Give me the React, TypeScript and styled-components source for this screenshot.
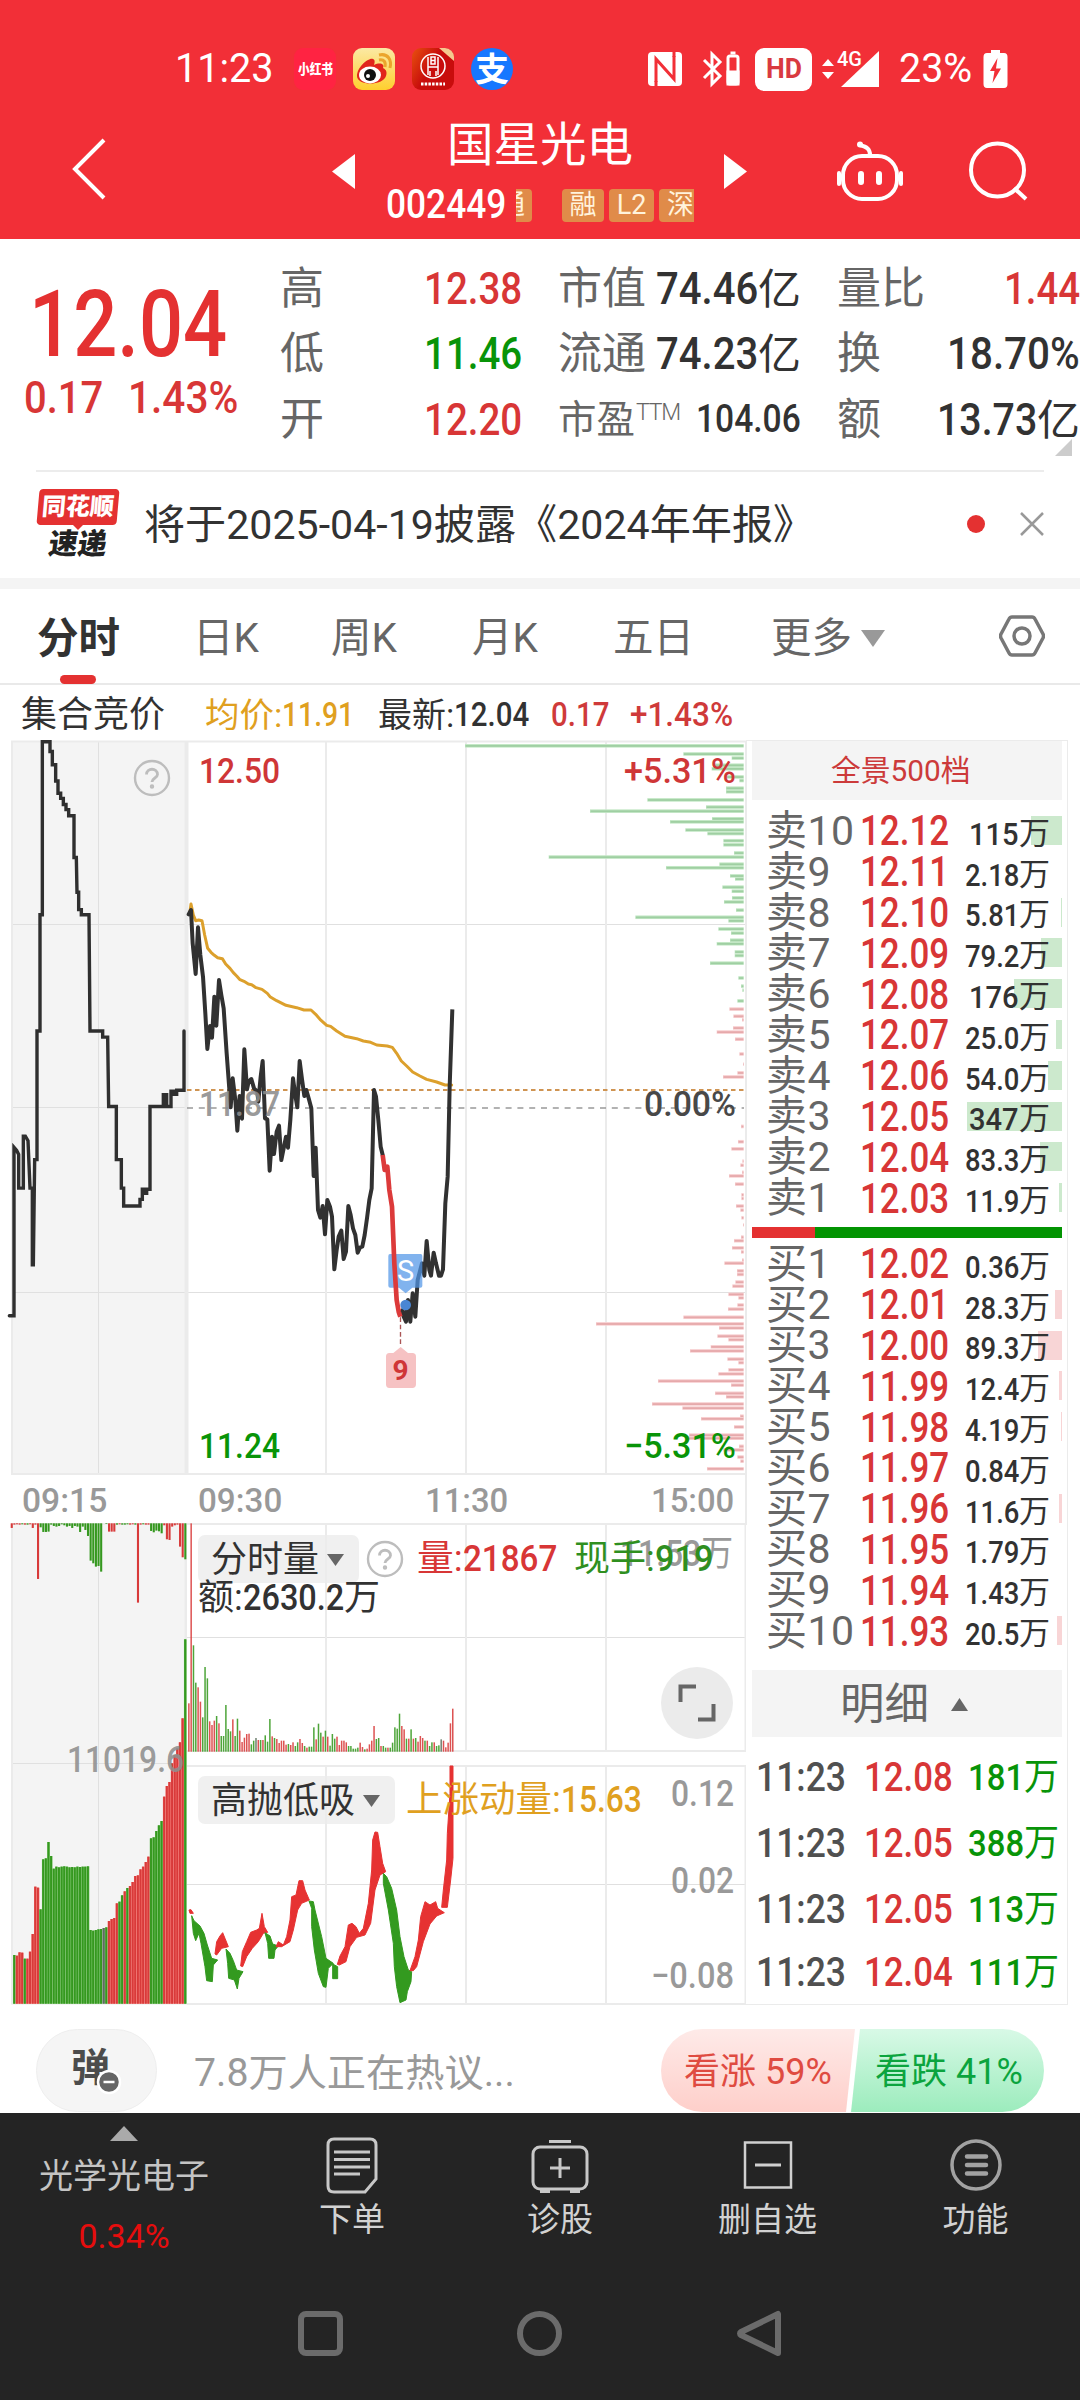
import React, { useLayoutEffect, useRef, useState } from "react";
import styled, { createGlobalStyle } from "styled-components";

const FONT = `Roboto, "Noto Sans CJK SC", "Noto Sans", sans-serif`;
const RED = "#e43131";
const GREEN = "#089408";
const INK = "#323232";
const MUTE = "#666666";
const SOFT = "#999999";
const GOLD = "#e0a01f";

const GlobalStyle = createGlobalStyle`
  * { box-sizing: border-box; }
  body { margin: 0; background: #fff; font-family: ${FONT}; line-height: 1; color: ${INK}; }
  svg { display: block; flex: none; }
  svg text { font-family: ${FONT}; }
`;

/* ---------- text that is squeezed to a known width ---------- */

const FitBox = styled.span<{ $w: number; $size: number; $c?: string; $weight?: number }>`
  display: inline-block;
  flex: none;
  width: ${(p) => p.$w}px;
  height: ${(p) => p.$size}px;
  font-size: ${(p) => p.$size}px;
  line-height: ${(p) => p.$size}px;
  font-weight: ${(p) => p.$weight ?? 400};
  color: ${(p) => p.$c ?? INK};
  white-space: nowrap;
`;
const FitInner = styled.span`
  display: inline-block;
  transform-origin: 0 50%;
`;

type FitProps = { w: number; size: number; c?: string; weight?: number; children: React.ReactNode };
function Fit({ w, size, c, weight, children }: FitProps) {
  const ref = useRef<HTMLSpanElement>(null);
  const [scale, setScale] = useState(1);
  useLayoutEffect(() => {
    if (ref.current) setScale(w / ref.current.offsetWidth);
  }, [w]);
  return (
    <FitBox $w={w} $size={size} $c={c} $weight={weight}>
      <FitInner ref={ref} style={{ transform: `scaleX(${scale})` }}>
        {children}
      </FitInner>
    </FitBox>
  );
}

/* ---------- page ---------- */

const Page = styled.div`
  width: 1080px;
  height: 2400px;
  display: flex;
  flex-direction: column;
  overflow: hidden;
  background: #fff;
`;

const TopArea = styled.header`
  height: 239px;
  background: #f22f37;
  color: #fff;
`;
const StatusBar = styled.div`
  height: 100px;
  padding: 38px 72px 0 175px;
  display: flex;
  align-items: center;
  justify-content: space-between;
`;
const StatusGroup = styled.div<{ $gap: number }>`
  display: flex;
  align-items: center;
  gap: ${(p) => p.$gap}px;
`;
const AppTile = styled.div<{ $bg: string; $round?: boolean }>`
  width: 42px;
  height: 42px;
  border-radius: ${(p) => (p.$round ? "50%" : "9px")};
  background: ${(p) => p.$bg};
  display: flex;
  align-items: center;
  justify-content: center;
  overflow: hidden;
  color: #fff;
`;
const HdBadge = styled.div`
  width: 57px;
  height: 43px;
  border-radius: 9px;
  background: #fff;
  display: flex;
  align-items: center;
  justify-content: center;
`;

const TitleBar = styled.div`
  height: 139px;
  display: flex;
  align-items: center;
  padding-left: 70px;
`;
const Arrow = styled.svg<{ $ml: number }>`
  margin-left: ${(p) => p.$ml}px;
  margin-top: 3px;
`;
const TitleColumn = styled.div`
  width: 308px;
  height: 139px;
  margin-left: 31px;
  padding-top: 22px;
  display: flex;
  flex-direction: column;
  align-items: center;
`;
const StockName = styled.h1`
  margin: 0 0 20px;
  height: 46px;
  font-size: 46.5px;
  line-height: 46px;
  font-weight: 400;
`;
const CodeRow = styled.div`
  width: 308px;
  height: 34px;
  display: flex;
  align-items: center;
`;
const TagStrip = styled.div`
  width: 179px;
  height: 33px;
  margin-left: 9px;
  display: flex;
  overflow: hidden;
  justify-content: flex-end;
`;
const Tag = styled.span<{ $w: number; $mr?: number; $clip?: "left" | "right" }>`
  flex: none;
  width: ${(p) => p.$w}px;
  height: 33px;
  margin-right: ${(p) => p.$mr ?? 0}px;
  border-radius: ${(p) => (p.$clip === "left" ? "0 4px 4px 0" : p.$clip === "right" ? "4px 0 0 4px" : "4px")};
  background: #e08b49;
  color: #fff3dc;
  font-size: 27px;
  line-height: 33px;
  display: flex;
  overflow: hidden;
  justify-content: ${(p) => (p.$clip === "left" ? "flex-end" : p.$clip === "right" ? "flex-start" : "center")};
  padding: 0 ${(p) => (p.$clip === "left" ? 7 : 0)}px 0 ${(p) => (p.$clip === "right" ? 8 : 0)}px;
`;

/* ---------- quote ---------- */

const Quote = styled.section`
  height: 231px;
  display: flex;
  position: relative;
`;
const PriceBlock = styled.div`
  width: 281px;
  padding: 39px 0 0 29px;
`;
const ChangeRow = styled.div`
  display: flex;
  gap: 25px;
  margin: 4px 0 0 -5px;
`;
const StatGrid = styled.div`
  display: grid;
  grid-template-columns: 242px 243px 243px;
  grid-auto-rows: 65.6px;
  column-gap: 36px;
  padding-top: 17px;
`;
const Stat = styled.div`
  display: flex;
  justify-content: space-between;
  align-items: center;
`;
const StatLabel = styled.span<{ $size?: number }>`
  font-size: ${(p) => p.$size ?? 44}px;
  color: ${MUTE};
  white-space: nowrap;
`;
const Sup = styled.sup`
  font-size: 23px;
  font-weight: 300;
  line-height: 0;
  vertical-align: 13px;
  margin-left: 1px;
  letter-spacing: -1.2px;
`;
const Corner = styled.svg`
  position: absolute;
  right: 8px;
  bottom: 14px;
`;

const News = styled.section`
  margin: 0 36px;
  height: 108px;
  border-top: 2px solid #ececec;
  display: flex;
  align-items: center;
  padding-bottom: 2px;
`;
const NewsBadge = styled.div`
  width: 84px;
  height: 70px;
  margin-right: 24px;
  display: flex;
  flex-direction: column;
  align-items: center;
`;
const BadgeTop = styled.div`
  width: 80px;
  height: 36px;
  border-radius: 4px;
  background: ${RED};
  color: #fff;
  font-weight: 900;
  font-size: 24px;
  line-height: 36px;
  text-align: center;
  transform: skewX(-5deg);
`;
const BadgeTail = styled.div`
  border: 5px solid transparent;
  border-top-color: ${RED};
  border-bottom: 0;
`;
const BadgeBottom = styled.div`
  font-weight: 900;
  font-size: 29px;
  line-height: 28px;
  transform: skewX(-8deg);
  color: #222;
`;
const Headline = styled.div`
  padding-top: 3px;
`;
const Dot = styled.i`
  width: 18px;
  height: 18px;
  border-radius: 50%;
  background: ${RED};
  margin: 0 35px 0 auto;
`;
const Band = styled.div`
  height: 11px;
  background: #f4f4f4;
`;

const Tabs = styled.nav`
  height: 96px;
  padding-left: 37px;
  border-bottom: 2px solid #e9e9e9;
  display: grid;
  grid-template-columns: 156px 138px 141px 141px 158px 228px 46px;
  align-items: center;
`;
const Tab = styled.div<{ $active?: boolean }>`
  position: relative;
  height: 94px;
  padding-top: 5px;
  display: flex;
  align-items: center;
  gap: 9px;
  font-size: ${(p) => (p.$active ? 41.5 : 40.5)}px;
  font-weight: ${(p) => (p.$active ? 600 : 400)};
  color: ${(p) => (p.$active ? INK : MUTE)};
  &::after {
    content: "";
    display: ${(p) => (p.$active ? "block" : "none")};
    position: absolute;
    left: 23px;
    bottom: -1px;
    width: 36px;
    height: 9px;
    border-radius: 5px;
    background: ${RED};
  }
`;
const InfoRow = styled.div`
  height: 56px;
  padding: 3px 0 0 21px;
  display: flex;
  align-items: center;
`;
const Gap = styled.span<{ $w: number }>`
  flex: none;
  width: ${(p) => p.$w}px;
`;

/* ---------- charts ---------- */

const Main = styled.main`
  height: 1264px;
  display: flex;
`;
const ChartColumn = styled.div`
  width: 746px;
  display: flex;
  flex-direction: column;
`;
const TimeAxis = styled.div`
  height: 49px;
  display: flex;
  align-items: center;
  padding: 3px 0 0 22px;
`;
const Lower = styled.div`
  display: flex;
  height: 482px;
`;
const LowerRight = styled.div`
  display: flex;
  flex-direction: column;
  gap: 13px;
`;
const Panel = styled.div<{ $h: number }>`
  position: relative;
  width: 559px;
  height: ${(p) => p.$h}px;
`;
const PanelLegend = styled.div<{ $top: number }>`
  position: absolute;
  left: 11px;
  top: ${(p) => p.$top}px;
  display: flex;
  align-items: center;
`;
const Picker = styled.div<{ $w: number }>`
  width: ${(p) => p.$w}px;
  height: 48px;
  padding: 2px 15px 0 13px;
  border-radius: 7px;
  background: rgba(236, 236, 236, 0.8);
  display: flex;
  align-items: center;
  justify-content: space-between;
  font-size: 36px;
  line-height: 40px;
`;
const PanelLine = styled.div`
  position: absolute;
  left: 11px;
  top: 57px;
`;
const ExpandButton = styled.div`
  position: absolute;
  left: 474px;
  top: 144px;
  width: 72px;
  height: 72px;
  border-radius: 50%;
  background: #ebebeb;
  display: flex;
  align-items: center;
  justify-content: center;
`;

/* ---------- order book ---------- */

const Book = styled.aside`
  width: 322px;
  height: 1265px;
  margin-top: -1px;
  border: 1px solid #ebebeb;
  border-left: 0;
  padding: 0 5px 0 6px;
`;
const BookHead = styled.div<{ $h: number; $pt?: number; $pr: number }>`
  height: ${(p) => p.$h}px;
  padding: ${(p) => p.$pt ?? 0}px ${(p) => p.$pr}px 0 0;
  background: #f4f4f4;
  display: flex;
  align-items: center;
  justify-content: center;
`;
const BookRows = styled.div<{ $pt: number; $pb: number }>`
  padding: ${(p) => p.$pt}px 0 ${(p) => p.$pb}px;
`;
const BookRow = styled.div`
  position: relative;
  height: 40.8px;
  padding-left: 14px;
  display: flex;
  align-items: center;
`;
const RowLabel = styled.span`
  width: 94px;
  font-size: 41px;
  color: ${MUTE};
  white-space: nowrap;
  letter-spacing: 0.5px;
`;
const DepthBar = styled.i<{ $up?: boolean }>`
  position: absolute;
  right: 0;
  top: 5px;
  height: 29px;
  background: ${(p) => (p.$up ? "#f8d5d6" : "#cce9cd")};
`;
const Amount = styled.span`
  position: relative;
  margin: 5px 12px 0 auto;
  display: flex;
`;
const Ratio = styled.div`
  height: 11px;
  background: linear-gradient(90deg, ${RED} 0 63.5px, #029402 63.5px);
`;
const Trades = styled.div`
  padding-top: 7px;
`;
const Trade = styled.div<{ $h: number }>`
  height: ${(p) => p.$h}px;
  display: flex;
  align-items: center;
  padding-left: 4px;
`;
const TradeAmount = styled.span`
  margin: 0 3px 0 auto;
  display: flex;
`;

/* ---------- footer ---------- */

const Talk = styled.section`
  height: 108px;
  padding: 24px 36px 1px;
  display: flex;
`;
const Danmaku = styled.div`
  width: 121px;
  height: 83px;
  border-radius: 42px;
  background: #f5f5f5;
  border: 1px solid #eee;
  display: flex;
  align-items: center;
  justify-content: center;
  position: relative;
  font-size: 39px;
  font-weight: 700;
  color: #4c4c4c;
  padding: 0 12px 4px 0;
`;
const MinusBadge = styled.svg`
  position: absolute;
  left: 59px;
  top: 39px;
`;
const TalkHint = styled.div`
  width: 504px;
  padding: 4px 0 0 37px;
  display: flex;
  align-items: center;
`;
const Votes = styled.div`
  width: 383px;
  height: 83px;
  border-radius: 42px;
  overflow: hidden;
  display: flex;
`;
const Vote = styled.div<{ $up?: boolean }>`
  width: ${(p) => (p.$up ? 199 : 198)}px;
  margin-left: ${(p) => (p.$up ? 0 : -14)}px;
  height: 83px;
  padding: 2px 0 0 ${(p) => (p.$up ? 23 : 29)}px;
  display: flex;
  align-items: center;
  background: ${(p) => (p.$up ? "linear-gradient(#feeae8, #fecfca)" : "linear-gradient(#d8f9e6, #9cecbd)")};
  clip-path: ${(p) => (p.$up ? "polygon(0 0, 194px 0, 185px 100%, 0 100%)" : "polygon(14px 0, 100% 0, 100% 100%, 5px 100%)")};
`;
const Dock = styled.footer`
  height: 287px;
  background: #242424;
  color: #d2d2d2;
`;
const DockRow = styled.div`
  height: 150px;
  display: grid;
  grid-template-columns: 248px 208px 208px 207px 209px;
`;
const Sector = styled.div`
  display: flex;
  flex-direction: column;
  align-items: center;
  padding-top: 13px;
`;
const SectorName = styled.div`
  font-size: 34px;
  line-height: 34px;
  margin: 18px 0 26px;
  color: #c4c4c4;
`;
const DockItem = styled.div`
  display: flex;
  flex-direction: column;
  align-items: center;
  font-size: 33px;
`;
const DockIcon = styled.div`
  height: 90px;
  padding-top: 22px;
`;
const NavRow = styled.div`
  height: 137px;
  padding: 47px 0 0 297px;
  display: flex;
  gap: 172px;
`;

/* ---------- data ---------- */

type Level = [string, string, string, number];
const SELLS: Level[] = [
  ["10", "12.12", "115", 31], ["9", "12.11", "2.18", 0], ["8", "12.10", "5.81", 1], ["7", "12.09", "79.2", 21],
  ["6", "12.08", "176", 48], ["5", "12.07", "25.0", 6], ["4", "12.06", "54.0", 14], ["3", "12.05", "347", 95],
  ["2", "12.04", "83.3", 22], ["1", "12.03", "11.9", 3],
];
const BUYS: Level[] = [
  ["1", "12.02", "0.36", 0], ["2", "12.01", "28.3", 7], ["3", "12.00", "89.3", 24], ["4", "11.99", "12.4", 3],
  ["5", "11.98", "4.19", 1], ["6", "11.97", "0.84", 0], ["7", "11.96", "11.6", 3], ["8", "11.95", "1.79", 0],
  ["9", "11.94", "1.43", 0], ["10", "11.93", "20.5", 5],
];
const TRADES: [string, string, number][] = [
  ["12.08", "181", 66], ["12.05", "388", 66], ["12.05", "113", 66], ["12.04", "111", 60],
];

const AUCTION_PATH =
  "M28 1148H42V818L50 824L56 832V898H70V796H76L84 805L90 898H97V1048H100L104 842H111V590H120V362H127V23H150V42H157V68H167V100H174V124H182V134H190V146H198V156H206V168H222V250H229L231 318H236V352H244V362H267L270 590H308V602H323L326 738H349V842H364V898H371V933H420V920H427V900H433V908H440V900H450V738H490V715H500V738H513V708H522V714H530V706H552V590";
const PRICE_A =
  "26,103 33,90 38,190 47,282 54,142 61,225 69,290 76,400 82,507 90,438 96,473 103,350 109,437 117,300 124,345 131,385 140,520 152,682 158,595 166,660 172,752 179,648 186,716 193,508 201,628 206,605 214,597 222,625 232,635 235,665 242,590 248,543 255,715 262,718 269,872 276,770 282,822 290,755 297,737 304,840 311,805 318,770 324,803 331,720 339,595 345,640 352,682 359,543 366,598 373,648 379,630 386,655 394,685 401,888 407,803 414,990 421,1013 428,978 435,1063 442,960 450,980 456,1010 463,1168 470,1110 476,1070 484,1052 491,1137 498,1115 505,978 512,1005 519,1045 526,1065 533,1118 540,1102 547,1100 554,1065 561,1015 568,960 575,925 582,630 588,650 595,720 602,800 608,825";
const PRICE_FALL = "608,825 614,870 622,860 628,930 636,980 643,1150 650,1260 656,1295 661,1310";
const PRICE_B =
  "661,1300 668,1290 671,1310 678,1325 684,1260 691,1325 698,1240 706,1310 713,1200 726,1150 733,1187 740,1083 748,1170 753,1187 761,1118 768,1150 777,1187 783,1187 789,1168 796,970 803,890 809,620 817,388";
const AVERAGE =
  "30,95 33,72 40,105 47,122 56,120 66,122 74,165 83,205 93,217 103,226 113,233 127,236 137,252 150,265 160,278 170,288 180,299 192,304 205,312 215,314 228,323 246,328 262,340 270,350 290,362 318,376 350,383 372,390 393,390 407,403 420,418 440,436 452,439 470,453 495,469 530,476 550,483 572,487 590,495 622,498 637,502 650,520 664,543 680,558 698,576 720,588 740,598 770,606 795,615 815,615";

const DEPTH_GREEN =
  "31:75 47:730 55:875 69:825 76:815 92:860 99:898 114:858 121:858 137:622 151:798 159:450 174:816 180:690 196:736 203:802 217:850 225:850 241:882 249:326 263:838 270:678 286:870 292:885 308:847 316:875 329:876 337:852 353:888 367:586 374:865 390:835 398:873 412:870 419:830 435:884 442:884 457:810 486:895 502:903 510:907 531:892";
const DEPTH_RED =
  "547:868 561:880 568:906 584:879 592:830 606:885 635:898 655:909 672:892 680:849 777:903 807:894 821:874 845:907 853:901 867:906 874:867 890:885 911:904 918:904 933:888 941:901 956:904 970:909 994:903 1001:882 1015:876 1023:903 1039:906 1045:853 1060:891 1067:891 1082:886 1090:877 1106:865 1113:895 1127:892 1135:864 1151:730 1164:468 1172:837 1188:832 1195:865 1209:812 1217:750 1233:862 1240:895 1254:865 1262:835 1276:654 1284:873 1300:825 1307:858 1321:636 1329:727 1345:900 1350:783 1366:882 1382:747 1388:740 1404:897 1411:850 1425:892 1433:901 1448:801";

const VOLUME =
  "r610 r70 g436 g548 r562 r605 g652 g501 g535 r664 r675 r662 g648 r670 g708 g708 g615 g687 g694 r658 g708 g656 r692 r726 r713 r702 r701 g733 g722 x714 r720 g720 r720 g706 g725 g657 r709 g714 r717 r729 r722 r722 r734 g732 r735 r727 g738 g727 r717 r729 g738 r743 g740 g740 g682 r718 g671 g698 r710 g692 r710 g737 g702 g716 r710 r735 r722 r722 r727 g738 g738 g746 g746 g743 r728 r741 g748 r746 r733 r722 r678 g717 g714 r738 g738 g743 r743 g743 g728 g682 g686 g641 r678 r688 g716 r716 g688 r716 g714 r725 r708 r714 g722 r722 g738 g727 r727 g738 g736 x718 r722 r742 r728 r670 r626";
const UNMATCHED =
  "r84 r74 r73 r74 g73 r74 g74 r73 r84 r74 r237 g82 g96 g96 g95 g74 g78 g80 g78 g73 g76 g80 g78 g84 g78 g80 g96 g80 g90 g108 g182 g190 g200 g198 g215 g70 g72 r95 r95 r95 g74 r73 g74 g74 g73 r74 r73 g74 r308 r74 g73 r74 r74 g93 g97 g92 g94 g100 r76 r118 r120 r80 r76 r74 r140 r172 g178";
const MATCHED =
  "g1365 r1367 r1357 r1358 g1376 r1376 r1355 r1302 r1160 r1163 g1228 g1078 g1075 g1026 g1068 g1106 g1100 g1102 g1100 g1099 g1100 g1102 g1101 g1102 g1100 g1101 g1100 g1100 g1099 g1290 g1292 g1290 g1288 g1287 x1284 g1282 r1263 r1257 r1254 r1210 g1205 g1186 r1174 g1164 r1158 r1146 r1128 r1126 r1108 r1100 r1086 r1070 g1015 g1012 g993 g976 g963 r890 r858 r846 r790 r765 r745 r727 r655 g418";

const WAVES: [string, string][] = [
  ["r", "567,1230 573,1229 580,1240 570,1240"],
  ["g", "575,1247 582,1262 600,1278 612,1300 622,1335 635,1375 653,1380 640,1395 637,1445 620,1442 615,1400 603,1330 597,1300 587,1322 580,1300"],
  ["r", "645,1362 650,1325 660,1308 668,1298 675,1315 685,1340 665,1345 650,1365"],
  ["g", "678,1347 690,1360 700,1382 710,1410 729,1415 717,1435 712,1467 703,1440 686,1435 683,1390"],
  ["r", "722,1398 727,1355 740,1325 752,1297 770,1290 778,1285 786,1240 793,1280 803,1297 790,1300 775,1325 757,1345 740,1370 728,1400"],
  ["g", "795,1298 810,1308 818,1332 835,1338 825,1350 822,1375 806,1375 803,1330"],
  ["r", "828,1340 835,1325 850,1335 860,1310 870,1260 875,1190 888,1185 897,1142 908,1142 915,1170 928,1200 905,1210 893,1230 880,1290 870,1325 845,1340"],
  ["g", "927,1203 940,1205 945,1230 965,1310 978,1375 1000,1390 985,1405 978,1462 970,1460 955,1420 943,1350 935,1280 935,1225"],
  ["g", "998,1392 1013,1400 1013,1436 998,1436"],
  ["r", "1012,1393 1020,1368 1035,1340 1045,1275 1056,1270 1068,1280 1078,1300 1090,1285 1105,1210 1115,1110 1118,1020 1125,996 1133,997 1140,1040 1148,1090 1157,1115 1140,1125 1125,1170 1112,1270 1095,1305 1070,1312 1050,1340 1038,1385 1018,1395"],
  ["g", "1150,1120 1160,1130 1175,1165 1190,1230 1200,1310 1212,1370 1225,1410 1235,1415 1233,1445 1222,1475 1218,1500 1200,1508 1190,1460 1183,1400 1180,1330 1165,1230 1150,1150"],
  ["r", "1230,1412 1245,1370 1255,1320 1262,1250 1275,1205 1290,1215 1307,1205 1313,1225 1333,1238 1310,1248 1290,1272 1270,1325 1250,1400 1240,1412"],
  ["r", "1325,1222 1330,1170 1340,1080 1342,1000 1350,880 1350,798 1359,798 1359,1075 1352,1140 1342,1222"],
];

const tone = (k: string) => (k === "r" ? "#d83a3a" : k === "g" ? "#35981f" : "#5c6f5c");
const grid = { stroke: "#e0e0e0", strokeWidth: 1 };
const frame = { stroke: "#ebebeb", strokeWidth: 2 };

/* ---------- pieces ---------- */

const Down = ({ w = 17, h = 12, c = "#666" }) => (
  <svg width={w} height={h} viewBox="0 0 17 12" preserveAspectRatio="none">
    <path d="M0 0H17L8.5 12Z" fill={c} />
  </svg>
);

const Help = () => (
  <svg width="38" height="38" viewBox="0 0 38 38" fill="none" stroke="#bdbdbd" strokeWidth="2.4">
    <circle cx="19" cy="19" r="17" />
    <path d="M13.5 15.5C13.5 8.5 24.5 8.5 24.5 15.5C24.5 19 19 19 19 23" strokeWidth="2.8" />
    <circle cx="19" cy="27.5" r="1" />
  </svg>
);

function PriceChart() {
  const bars = (s: string, c: string, halo: string) =>
    s.split(" ").map((b) => {
      const [y, x] = b.split(":").map(Number);
      const px = 440 + x / 3;
      const py = 730 + y / 1.96;
      return (
        <g key={b}>
          <rect x={px} y={py - 1.8} width={743.7 - px} height={3.6} fill={halo} />
          <rect x={px + 0.5} y={py - 0.8} width={Math.max(0.5, 742.9 - px)} height={1.8} fill={c} />
        </g>
      );
    });
  return (
    <svg width="746" height="733" viewBox="0 741 746 733" overflow="visible">
      <rect x="11" y="741" width="176" height="733" fill="#f4f4f4" />
      <g {...grid}>
        <path d="M98.5 741V1474M12 924.5H746M12 1107.5H187M12 1292.5H746" />
      </g>
      <g {...frame} fill="none">
        <path d="M12 741V1474M326 741V1474M466 741V1474M606 741V1474M746 741V1525M11 741.5H746M11 1474H746" />
        <path d="M186.5 741V1474" strokeWidth="4" />
      </g>
      {bars(DEPTH_GREEN, "#9fcfa2", "#c4e8c6")}
      {bars(DEPTH_RED, "#e6a9ab", "#f8d0d1")}
      <path d="M187 1090H744" stroke="#cf9452" strokeWidth="2" strokeDasharray="4.5 3.5" />
      <path d="M187 1108H744" stroke="#999" strokeWidth="1.6" strokeDasharray="6 5.8" />
      <path
        d={AUCTION_PATH}
        transform="translate(0 730) scale(.33333 .5102)"
        vectorEffect="non-scaling-stroke"
        fill="none"
        stroke="#2f2f2f"
        strokeWidth="3.4"
        strokeLinecap="round"
      />
      <g transform="translate(180 880) scale(.33333)" fill="none" strokeLinejoin="round" strokeLinecap="round" strokeWidth="12">
        <polyline points={AVERAGE} stroke="#dca02c" strokeWidth="9" />
        <polyline points={PRICE_A} stroke="#313131" />
        <polyline points={PRICE_B} stroke="#313131" strokeLinecap="butt" />
        <path d="M630 1122H722Q727 1122 727 1128V1218Q727 1223 721 1223H697L677 1240L657 1223H631Q625 1223 625 1217V1128Q625 1122 630 1122Z" fill="#5095e8" fillOpacity=".72" />
        <circle cx="677" cy="1275" r="16" fill="#4a86d4" />
        <polyline points={PRICE_FALL} stroke="#dc3a3a" strokeWidth="14" strokeLinecap="butt" />
        <path d="M661.5 1312V1400" stroke="#a55" strokeWidth="4" strokeDasharray="14 8" strokeLinecap="butt" />
        <path d="M628 1419H640L662 1401L684 1419H697Q708 1419 708 1430V1513Q708 1524 697 1524H628Q618 1524 618 1513V1430Q618 1419 628 1419Z" fill="#f6c2c3" />
      </g>
      <text x="405.5" y="1280.5" fontSize="29" fill="#fff" textAnchor="middle">S</text>
      <text x="400.5" y="1379.5" fontSize="28" fontWeight="700" fill="#cf3637" textAnchor="middle">9</text>
      <g fontWeight="500" fontSize="35.5">
        <text x="199" y="783" fill="#cf3637" textLength="81" lengthAdjust="spacingAndGlyphs">12.50</text>
        <text x="199" y="1457.5" fill={GREEN} textLength="81" lengthAdjust="spacingAndGlyphs">11.24</text>
        <text x="199" y="1116" fill="#8c8c8c" fillOpacity=".9" textLength="81" lengthAdjust="spacingAndGlyphs">11.87</text>
        <text x="624" y="783" fill="#cf3637" textLength="112" lengthAdjust="spacingAndGlyphs">+5.31%</text>
        <text x="644" y="1116" fill="#484848" textLength="92" lengthAdjust="spacingAndGlyphs">0.00%</text>
        <text x="624" y="1457.5" fill={GREEN} textLength="112" lengthAdjust="spacingAndGlyphs">−5.31%</text>
      </g>
      <g transform="translate(133 759)">
        <Help />
      </g>
    </svg>
  );
}

function AuctionVolume() {
  return (
    <svg width="187" height="482" viewBox="0 1523 187 482">
      <rect x="11" y="1523" width="176" height="482" fill="#f4f4f4" />
      <path d="M98.5 1523V2004M12 1763.5H187" {...grid} />
      <path d="M12 1523V2004M11 1524H187" {...frame} />
      <path d="M186 1523V2004" {...frame} strokeWidth="3" />
      {UNMATCHED.split(" ").map((b, i) => (
        <rect key={i} x={10.7 + i * 2.63} y={1523.3} width={2.1} height={(Number(b.slice(1)) - 70) / 3} fill={tone(b[0])} />
      ))}
      {MATCHED.split(" ").map((b, i) => {
        const y = 1500 + Number(b.slice(1)) / 3;
        return (
          <g key={i}>
            <rect x={13 + i * 2.63} y={y} width={2.7} height={2003.7 - y} fill={b[0] === "r" ? "#f26a66" : b[0] === "g" ? "#6fbf5f" : "#999"} />
            <rect x={13.3 + i * 2.63} y={y} width={1.9} height={2003.7 - y} fill={tone(b[0])} />
          </g>
        );
      })}
      <text x="67" y="1772" fontSize="36" fontWeight="500" fill="#8f8f8f" fillOpacity=".9" textLength="117" lengthAdjust="spacingAndGlyphs">
        11019.6
      </text>
    </svg>
  );
}

function VolumeChart() {
  return (
    <svg width="559" height="229" viewBox="187 1523 559 229">
      <path d="M187 1637.5H746" {...grid} />
      <path d="M187 1524H746M187 1751H746M326 1523V1751M466 1523V1751M606 1523V1751M745.5 1523V1751" {...frame} />
      {VOLUME.split(" ").map((b, i) => {
        const y = 1500 + Number(b.slice(1)) / 3;
        return <rect key={i} x={188.1 + i * 2.315} y={y} width={1.5} height={1751.7 - y} fill={tone(b[0])} fillOpacity=".88" />;
      })}
      <text x="620" y="1566" fontSize="36" fontWeight="500" fill="#999" textLength="113" lengthAdjust="spacingAndGlyphs">
        11.53<tspan fontWeight="400">万</tspan>
      </text>
    </svg>
  );
}

function SwingChart() {
  return (
    <svg width="559" height="240" viewBox="187 1765 559 240">
      <path d="M187 1884.5H746" {...grid} />
      <path d="M187 1766H746M187 2004H746M326 1765V2004M466 1765V2004M606 1765V2004M745.5 1765V2004" {...frame} />
      <g transform="translate(0 1500) scale(.33333)">
        {WAVES.map(([k, pts], i) => (
          <polygon key={i} points={pts} fill={k === "r" ? "#e63232" : "#339a1f"} stroke={k === "r" ? "#e63232" : "#339a1f"} strokeWidth="3" />
        ))}
      </g>
      <g fontWeight="500" fontSize="36" fill="#999">
        <text x="671" y="1806" textLength="63" lengthAdjust="spacingAndGlyphs">0.12</text>
        <text x="671" y="1893" textLength="63" lengthAdjust="spacingAndGlyphs">0.02</text>
        <text x="651" y="1988" textLength="83" lengthAdjust="spacingAndGlyphs">−0.08</text>
      </g>
    </svg>
  );
}

function Levels({ side, rows, up }: { side: string; rows: Level[]; up?: boolean }) {
  return (
    <>
      {rows.map(([n, price, vol, w]) => (
        <BookRow key={n}>
          <DepthBar $up={up} style={{ width: w }} />
          <RowLabel>{side}{n}</RowLabel>
          <Fit w={89} size={42} weight={500} c="#d83636">{price}</Fit>
          <Amount>
            <Fit w={vol.length === 3 ? 50 : 54} size={32} weight={500}>{vol}</Fit>
            <Fit w={31} size={31}>万</Fit>
          </Amount>
        </BookRow>
      ))}
    </>
  );
}

const RobotSvg = styled.svg`
  margin-left: 89px;
`;
const SearchSvg = styled.svg`
  margin-left: 64px;
`;

function RobotIcon() {
  return (
    <RobotSvg width="68" height="64" viewBox="0 0 68 64" fill="none" stroke="#fff" strokeWidth="4" strokeLinecap="round">
      <rect x="7" y="18" width="54" height="43" rx="19" />
      <path d="M34 17C34 11 31 9 24 7M3 35V46M65 35V46" />
      <circle cx="24" cy="6.5" r="3" fill="#fff" stroke="none" />
      <path d="M25 36V44M43 36V44" strokeWidth="6" />
    </RobotSvg>
  );
}

function SearchIcon() {
  return (
    <SearchSvg width="62" height="64" viewBox="0 0 62 64" fill="none" stroke="#fff" strokeWidth="4">
      <circle cx="29.5" cy="32" r="26.5" />
      <path d="M46 50L58 61" />
    </SearchSvg>
  );
}

export default function App() {
  return (
    <Page>
      <GlobalStyle />
      <TopArea>
        <StatusBar>
          <StatusGroup $gap={17}>
            <Fit w={99} size={40} c="#fff">11:23</Fit>
            <Gap $w={0} style={{ display: "none" }} />
            <AppTiles />
          </StatusGroup>
          <StatusGroup $gap={0}>
            <svg width="36" height="36" viewBox="0 0 36 36">
              <rect x="1" y="1" width="34" height="34" rx="4" fill="#fff" />
              <path d="M9 31V8L27 28V5" fill="none" stroke="#f22f37" strokeWidth="3" />
              <path d="M9 35V30M27 1V6" stroke="#f22f37" strokeWidth="3" />
            </svg>
            <Gap $w={19} />
            <svg width="38" height="38" viewBox="0 0 38 38" fill="none" stroke="#fff" strokeWidth="3">
              <path d="M2 10L18 26L10 34V4L18 12L2 28" />
              <rect x="26" y="6" width="10" height="28" rx="2" />
              <path d="M28.5 3H33.5" />
              <path d="M26 22H36V34H26Z" fill="#fff" />
            </svg>
            <Gap $w={15} />
            <HdBadge>
              <Fit w={36} size={28} c="#d93a40" weight={700}>HD</Fit>
            </HdBadge>
            <Gap $w={8} />
            <svg width="60" height="42" viewBox="0 0 60 42">
              <path d="M2 18L8 11L14 18ZM2 24L8 31L14 24Z" fill="#fff" />
              <path d="M59 3V39H21Z" fill="#fff" />
              <text x="17" y="17.5" fontSize="21" fontWeight="500" fill="#fff" textLength="25" lengthAdjust="spacingAndGlyphs">4G</text>
            </svg>
            <Gap $w={19} />
            <Fit w={73} size={40} c="#fff">23%</Fit>
            <Gap $w={11} />
            <svg width="25" height="40" viewBox="0 0 25 40">
              <path d="M8 1H17V4H21Q24.5 4 24.5 8V35Q24.5 39 21 39H4Q.5 39 .5 35V8Q.5 4 4 4H8Z" fill="#fff" />
              <path d="M14.5 9L7 22H11.5L9.5 34L18 19.5H13Z" fill="#f22f37" />
            </svg>
          </StatusGroup>
        </StatusBar>
        <TitleBar>
          <svg width="38" height="64" viewBox="0 0 38 64" fill="none" stroke="#fff" strokeWidth="4">
            <path d="M34 2L5 31L34 60" />
          </svg>
          <Arrow $ml={224} width="23" height="35" viewBox="0 0 23 35"><path d="M23 0V35L0 17.5Z" fill="#fff" /></Arrow>
          <TitleColumn>
            <StockName>国星光电</StockName>
            <CodeRow>
              <Fit w={120} size={40} c="#fff" weight={500}>002449</Fit>
              <TagStrip>
                <Tag $w={16} $mr={30} $clip="left">通</Tag>
                <Tag $w={42} $mr={5}>融</Tag>
                <Tag $w={45} $mr={5}>L2</Tag>
                <Tag $w={35} $clip="right">深</Tag>
              </TagStrip>
            </CodeRow>
          </TitleColumn>
          <Arrow $ml={30} width="23" height="35" viewBox="0 0 23 35"><path d="M0 0V35L23 17.5Z" fill="#fff" /></Arrow>
          <RobotIcon />
          <SearchIcon />
        </TitleBar>
      </TopArea>

      <Quote>
        <PriceBlock>
          <Fit w={198} size={93} weight={500} c={RED}>12.04</Fit>
          <ChangeRow>
            <Fit w={79} size={45} weight={500} c="#d83636">0.17</Fit>
            <Fit w={110} size={45} weight={500} c="#d83636">1.43%</Fit>
          </ChangeRow>
        </PriceBlock>
        <StatGrid>
          <Stat><StatLabel>高</StatLabel><Fit w={98} size={44} weight={500} c="#d83636">12.38</Fit></Stat>
          <Stat><StatLabel>市值</StatLabel><span><Fit w={102} size={44} weight={500}>74.46</Fit><Fit w={43} size={42}>亿</Fit></span></Stat>
          <Stat><StatLabel>量比</StatLabel><Fit w={76} size={44} weight={500} c="#d83636">1.44</Fit></Stat>
          <Stat><StatLabel>低</StatLabel><Fit w={98} size={44} weight={500} c={GREEN}>11.46</Fit></Stat>
          <Stat><StatLabel>流通</StatLabel><span><Fit w={102} size={44} weight={500}>74.23</Fit><Fit w={43} size={42}>亿</Fit></span></Stat>
          <Stat><StatLabel>换</StatLabel><Fit w={133} size={44} weight={500}>18.70%</Fit></Stat>
          <Stat><StatLabel>开</StatLabel><Fit w={98} size={44} weight={500} c="#d83636">12.20</Fit></Stat>
          <Stat><StatLabel $size={38.5}>市盈<Sup>TTM</Sup></StatLabel><Fit w={105} size={39} weight={500}>104.06</Fit></Stat>
          <Stat><StatLabel>额</StatLabel><span><Fit w={100} size={44} weight={500}>13.73</Fit><Fit w={43} size={42}>亿</Fit></span></Stat>
        </StatGrid>
        <Corner width="17" height="17" viewBox="0 0 17 17"><path d="M17 0V17H0Z" fill="#ccc" /></Corner>
      </Quote>

      <News>
        <NewsBadge>
          <BadgeTop>同花顺</BadgeTop>
          <BadgeTail />
          <BadgeBottom>速递</BadgeBottom>
        </NewsBadge>
        <Headline><Fit w={670} size={41}>将于2025-04-19披露《2024年年报》</Fit></Headline>
        <Dot />
        <svg width="24" height="24" viewBox="0 0 24 24" stroke="#999" strokeWidth="2.5"><path d="M1 1L23 23M23 1L1 23" /></svg>
      </News>
      <Band />

      <Tabs>
        <Tab $active>分时</Tab>
        <Tab>日K</Tab>
        <Tab>周K</Tab>
        <Tab>月K</Tab>
        <Tab>五日</Tab>
        <Tab>更多<Down w={24} h={17} c="#999" /></Tab>
        <svg width="46" height="44" viewBox="0 0 46 44" fill="none" stroke="#777" strokeWidth="3.5" strokeLinejoin="round">
          <path d="M13 3H33Q35 3 36 5L44 20Q45 22 44 24L36 39Q35 41 33 41H13Q11 41 10 39L2 24Q1 22 2 20L10 5Q11 3 13 3Z" />
          <circle cx="23" cy="22" r="8" />
        </svg>
      </Tabs>
      <InfoRow>
        <Fit w={144} size={36}>集合竞价</Fit>
        <Gap $w={40} />
        <Fit w={77} size={34} c={GOLD}>均价:</Fit>
        <Fit w={72} size={33} weight={500} c={GOLD}>11.91</Fit>
        <Gap $w={24} />
        <Fit w={76} size={34}>最新:</Fit>
        <Fit w={75} size={33} weight={500}>12.04</Fit>
        <Gap $w={22} />
        <Fit w={58} size={33} weight={500} c="#cf3a3a">0.17</Fit>
        <Gap $w={21} />
        <Fit w={103} size={33} weight={500} c="#cf3a3a">+1.43%</Fit>
      </InfoRow>

      <Main>
        <ChartColumn>
          <PriceChart />
          <TimeAxis>
            <Fit w={85} size={34} weight={500} c={SOFT}>09:15</Fit>
            <Gap $w={91} />
            <Fit w={84} size={34} weight={500} c={SOFT}>09:30</Fit>
            <Gap $w={143} />
            <Fit w={83} size={34} weight={500} c={SOFT}>11:30</Fit>
            <Gap $w={143} />
            <Fit w={83} size={34} weight={500} c={SOFT}>15:00</Fit>
          </TimeAxis>
          <Lower>
            <AuctionVolume />
            <LowerRight>
              <Panel $h={229}>
                <VolumeChart />
                <PanelLegend $top={12}>
                  <Picker $w={161}>分时量<Down /></Picker>
                  <Gap $w={7} />
                  <Help />
                  <Gap $w={13} />
                  <Fit w={46} size={36} c="#d83636">量:</Fit>
                  <Fit w={94} size={36} weight={500} c="#d83636">21867</Fit>
                  <Gap $w={17} />
                  <Fit w={81} size={36} c="#2f8f1f">现手:</Fit>
                  <Fit w={58} size={36} weight={500} c="#2f8f1f">919</Fit>
                </PanelLegend>
                <PanelLine>
                  <Fit w={45} size={36}>额:</Fit>
                  <Fit w={101} size={36} weight={500}>2630.2</Fit>
                  <Fit w={36} size={36}>万</Fit>
                </PanelLine>
                <ExpandButton>
                  <svg width="38" height="38" viewBox="0 0 38 38" fill="none" stroke="#666" strokeWidth="4">
                    <path d="M2.5 18V2.5H18M35.5 20V35.5H20" />
                  </svg>
                </ExpandButton>
              </Panel>
              <Panel $h={240}>
                <SwingChart />
                <PanelLegend $top={11}>
                  <Picker $w={197}>高抛低吸<Down /></Picker>
                  <Gap $w={11} />
                  <Fit w={155} size={36} c={GOLD}>上涨动量:</Fit>
                  <Fit w={81} size={36} weight={500} c={GOLD}>15.63</Fit>
                </PanelLegend>
              </Panel>
            </LowerRight>
          </Lower>
        </ChartColumn>

        <Book>
          <BookHead $h={59} $pr={12}><Fit w={140} size={30} c="#cc3a3a">全景500档</Fit></BookHead>
          <BookRows $pt={11} $pb={8.5}><Levels side="卖" rows={SELLS} /></BookRows>
          <Ratio />
          <BookRows $pt={5.5} $pb={18.5}><Levels side="买" rows={BUYS} up /></BookRows>
          <BookHead $h={67} $pt={2} $pr={7}>
            <Fit w={89} size={43} c={MUTE}>明细</Fit>
            <Gap $w={22} />
            <svg width="17" height="13" viewBox="0 0 17 13"><path d="M0 13H17L8.5 0Z" fill="#666" /></svg>
          </BookHead>
          <Trades>
            {TRADES.map(([price, amount, h], i) => (
              <Trade key={i} $h={h}>
                <Fit w={90} size={41} weight={500} c="#505050">11:23</Fit>
                <Gap $w={18} />
                <Fit w={89} size={41} weight={500} c="#d83636">{price}</Fit>
                <TradeAmount>
                  <Fit w={56} size={37} weight={500} c={GREEN}>{amount}</Fit>
                  <Fit w={35} size={37} c={GREEN}>万</Fit>
                </TradeAmount>
              </Trade>
            ))}
          </Trades>
        </Book>
      </Main>

      <Talk>
        <Danmaku>
          弹
          <MinusBadge width="26" height="26" viewBox="0 0 26 26">
            <circle cx="13" cy="13" r="11" fill="#666" stroke="#fff" strokeWidth="2.5" />
            <path d="M7.5 13H18.5" stroke="#fff" strokeWidth="2.5" />
          </MinusBadge>
        </Danmaku>
        <TalkHint><Fit w={321} size={38} c={SOFT}>7.8万人正在热议...</Fit></TalkHint>
        <Votes>
          <Vote $up><Fit w={148} size={36} c="#df4b41">看涨 59%</Fit></Vote>
          <Vote><Fit w={148} size={36} c="#0ba43e">看跌 41%</Fit></Vote>
        </Votes>
      </Talk>

      <Dock>
        <DockRow>
          <Sector>
            <svg width="28" height="15" viewBox="0 0 28 15"><path d="M14 0L28 15H0Z" fill="#aaa" /></svg>
            <SectorName>光学光电子</SectorName>
            <Fit w={91} size={34} c="#e60d0d">0.34%</Fit>
          </Sector>
          <DockItem>
            <DockIcon>
              <svg width="54" height="60" viewBox="0 0 54 60" fill="none" stroke="#c8c8c8" strokeWidth="3">
                <path d="M9 4H45Q51 4 51 10V44L40 57H9Q3 57 3 51V10Q3 4 9 4Z" />
                <path d="M9 17H45M9 24.5H45M9 32H45M9 39H35" />
              </svg>
            </DockIcon>
            下单
          </DockItem>
          <DockItem>
            <DockIcon>
              <svg width="60" height="60" viewBox="0 0 60 60" fill="none" stroke="#c8c8c8" strokeWidth="3">
                <rect x="3" y="12" width="54" height="42" rx="7" />
                <path d="M19 6.5H41M10 56.5H20M40 56.5H50M20 33H40M30 23V43" />
              </svg>
            </DockIcon>
            诊股
          </DockItem>
          <DockItem>
            <DockIcon>
              <svg width="50" height="60" viewBox="0 0 50 60" fill="none" stroke="#d0d0d0" strokeWidth="2.5">
                <rect x="2" y="7.5" width="46" height="45" />
                <path d="M12 30H38" strokeWidth="3" />
              </svg>
            </DockIcon>
            删自选
          </DockItem>
          <DockItem>
            <DockIcon>
              <svg width="54" height="60" viewBox="0 0 54 60" fill="none" stroke="#a2a2a2" strokeWidth="3.5">
                <circle cx="27" cy="30" r="24" />
                <path d="M18 21.5H37M18 30H37M18 38.5H37" strokeWidth="4.5" strokeLinecap="round" />
              </svg>
            </DockIcon>
            功能
          </DockItem>
        </DockRow>
        <NavRow>
          <svg width="47" height="47" viewBox="0 0 47 47" fill="none" stroke="#6b6b6b" strokeWidth="6"><rect x="4" y="4" width="39" height="39" rx="5" /></svg>
          <svg width="47" height="47" viewBox="0 0 47 47" fill="none" stroke="#6b6b6b" strokeWidth="6"><circle cx="23.5" cy="23.5" r="19.5" /></svg>
          <svg width="47" height="47" viewBox="0 0 47 47" fill="none" stroke="#6b6b6b" strokeWidth="6" strokeLinejoin="round"><path d="M43 4V43L6 25Q4 23.5 6 22Z" /></svg>
        </NavRow>
      </Dock>
    </Page>
  );
}

const TileRow = styled.div`
  display: flex;
  gap: 17px;
  padding-left: 3px;
`;

function AppTiles() {
  return (
    <TileRow>
      <AppTile $bg="#ff2342">
        <Fit w={35} size={14} c="#fff" weight={900}>小红书</Fit>
      </AppTile>
      <AppTile $bg="linear-gradient(#fbe9a4,#ffcf2e)">
        <svg width="42" height="42" viewBox="0 0 42 42">
          <path d="M4 28C4 19 16 9 20 11C23 12 21 17 21 17C27 14 32 16 30 20C34 22 34 25 33 28C30 38 4 38 4 28Z" fill="#e1251b" />
          <ellipse cx="17" cy="27" rx="11" ry="8.5" fill="#fff" />
          <circle cx="17" cy="27" r="6" fill="#111" />
          <circle cx="15" cy="28" r="2" fill="#fff" />
          <path d="M26 12C31 11 33 14 32 19M26 7C35 5 39 12 37 20" stroke="#eba52c" strokeWidth="3" fill="none" />
        </svg>
      </AppTile>
      <AppTile $bg="linear-gradient(120deg,#e8510e,#c80d0c 45%)">
        <svg width="42" height="42" viewBox="0 0 42 42" fill="none" stroke="#fff" strokeWidth="1.5">
          <circle cx="21" cy="18" r="12" />
          <path d="M16 9V27M26 9V27M16 19H26M19 9H23V16H19ZM19 12.5H23M18 23V28M24 23V28" />
          <path d="M27 0L42 13V0Z" fill="#f5c88f" stroke="none" />
          <path d="M9 36H33" strokeWidth="3" strokeDasharray="2.5 1.2" />
        </svg>
      </AppTile>
      <AppTile $bg="#1677ff" $round>
        <Fit w={34} size={33} c="#fff" weight={700}>支</Fit>
      </AppTile>
    </TileRow>
  );
}
